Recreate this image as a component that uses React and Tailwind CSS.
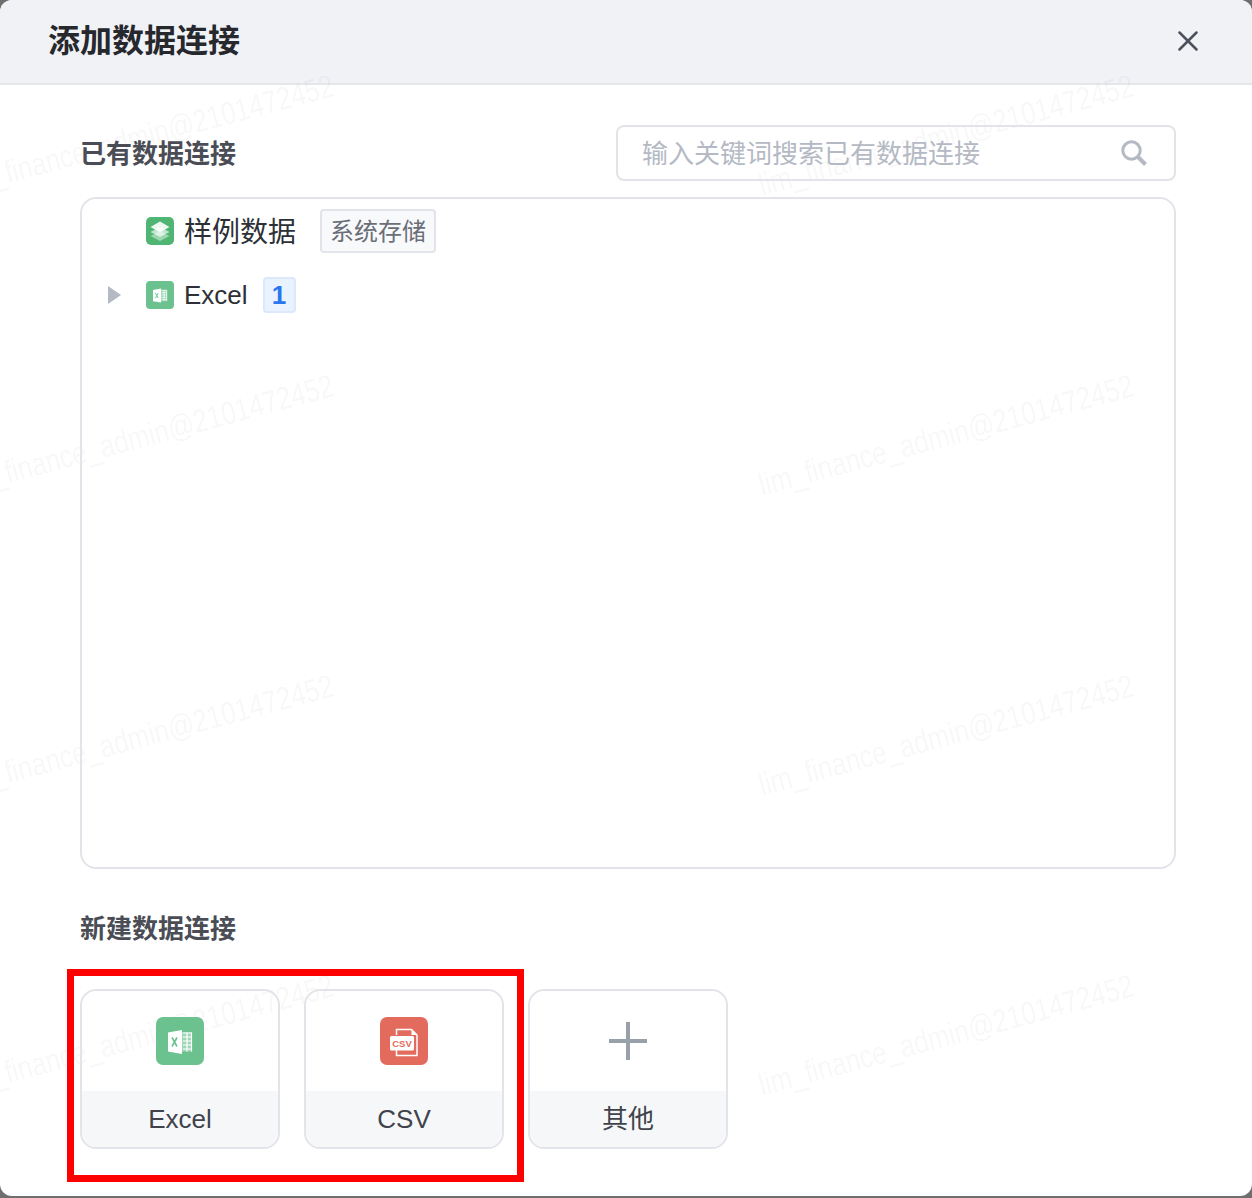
import React from 'react';
import { X } from 'lucide-react';

const cjk = '"Liberation Sans", "Noto Sans CJK SC", sans-serif';

const watermarks = [
  'left-[146px] top-[135px]',
  'left-[946px] top-[135px]',
  'left-[146px] top-[435px]',
  'left-[946px] top-[435px]',
  'left-[146px] top-[735px]',
  'left-[946px] top-[735px]',
  'left-[146px] top-[1035px]',
  'left-[946px] top-[1035px]'
];

const LayersIcon = () => (
  <svg viewBox="0 0 28 28" className="w-7 h-7 block">
    <rect width="28" height="28" rx="5" fill="#4fb573" />
    <path d="M14 14l-9.500 5 9.500 5 9.500-5z" fill="#fff" fillOpacity="0.45" />
    <path d="M14 10l-9.500 5 9.500 5 9.500-5z" fill="#fff" fillOpacity="0.65" />
    <path d="M14 4.500l-9.500 5.500 9.500 5.500 9.500-5.500z" fill="#fff" fillOpacity="0.9" />
  </svg>
);

const ExcelIcon = ({ className }) => (
  <svg viewBox="0 0 48 48" className={className}>
    <rect width="48" height="48" rx="7" fill="#6cc28f" />
    <path d="M26 13v24l-14-2.500V15.500z" fill="#fff" />
    <path d="M26 15h10v19.500H26z" fill="#fff" fillOpacity="0.35" />
    <path d="M27 16h8.500M27 20h8.500M27 24h8.500M27 28h8.500M27 32h8.500M31 15.500v19M35.500 15.500v19" stroke="#fff" strokeWidth="1.200" fill="none" />
    <path d="M16 20.500l5 9M21 20.500l-5 9" stroke="#6cc28f" strokeWidth="1.600" fill="none" />
  </svg>
);

const CsvIcon = ({ className }) => (
  <svg viewBox="0 0 48 48" className={className}>
    <rect width="48" height="48" rx="7" fill="#e36b5e" />
    <path d="M16.500 18v-5.500h15l5.500 5.500v20.500H16.500V33" stroke="#fff" strokeWidth="1.500" fill="none" />
    <path d="M31.500 12.500v5.500h5.500" fill="#fff" />
    <rect x="10" y="19" width="24" height="14.500" rx="1.500" fill="#fff" />
    <text x="22" y="29.500" textAnchor="middle" fontSize="9.500" fontWeight="700" fill="#e36b5e" fontFamily="Liberation Sans, sans-serif">CSV</text>
  </svg>
);

const SearchIcon = () => (
  <svg viewBox="0 0 26 26" className="w-[26px] h-[26px] block">
    <circle cx="10.500" cy="10.500" r="8.700" stroke="#b4b9c4" strokeWidth="3" fill="none" />
    <path d="M16.500 16.500L24.500 24.500" stroke="#b4b9c4" strokeWidth="4" fill="none" />
  </svg>
);

const PlusIcon = () => (
  <svg viewBox="0 0 38 38" className="w-[38px] h-[38px] block">
    <path d="M19 0v38M0 19h38" stroke="#98a0aa" strokeWidth="4" fill="none" />
  </svg>
);

const NewCard = ({ label, children }) => (
  <div className="w-[200px] h-[160px] border-2 border-[#e3e4ea] rounded-2xl overflow-hidden flex flex-col">
    <div className="h-[100px] flex items-center justify-center">{children}</div>
    <div className="flex-1 bg-[#f6f7f9] flex items-center justify-center text-[26px] text-[#40434b]">{label}</div>
  </div>
);

export default function App() {
  return (
    <div className="w-[1252px] h-[1198px] bg-[#6e6e6e] pb-[2px] overflow-hidden" style={{ fontFamily: cjk }}>
      <div className="relative w-full h-full bg-white rounded-[12px] overflow-hidden">
        <div className="h-[85px] bg-[#f0f2f6] border-b-2 border-[#e5e7eb] pl-12 pr-[47px] pb-[2px] flex items-center justify-between">
          <h1 className="text-[32px] font-semibold text-[#26282d]">添加数据连接</h1>
          <X className="w-[34px] h-[34px] text-[#4d515b]" strokeWidth={1.800} />
        </div>

        {watermarks.map((pos) => (
          <span
            key={pos}
            className={`absolute ${pos} -translate-x-1/2 -translate-y-1/2 -rotate-[15deg] scale-x-[0.81] text-[32px] leading-none whitespace-nowrap text-[#1f2a44]/[0.05]`}
          >
            lim_finance_admin@2101472452
          </span>
        ))}

        <div className="relative pl-20 pr-[76px] pt-10">
          <div className="flex items-center justify-between h-14">
            <h2 className="text-[26px] pt-[2px] font-semibold text-[#4a4d55]">已有数据连接</h2>
            <div className="w-[560px] h-14 border-2 border-[#e3e4ea] rounded-lg pl-[24px] pr-[27px] flex items-center justify-between text-[26px] text-[#b4b9c4]">
              <span className="pt-[2px]">输入关键词搜索已有数据连接</span>
              <SearchIcon />
            </div>
          </div>

          <div className="mt-4 h-[672px] border-2 border-[#e3e4ea] rounded-2xl pl-[26px] pt-[10px]">
            <div className="flex items-center h-11 pl-[38px]">
              <LayersIcon />
              <span className="ml-[10px] pt-[3px] text-[28px] text-[#2d3036]">样例数据</span>
              <span className="ml-6 w-[116px] h-11 border-2 border-[#e3e4ea] rounded bg-[#f8f9fb] flex items-center justify-center pt-[2px] text-2xl text-[#6a6e77]">系统存储</span>
            </div>
            <div className="flex items-center h-9 mt-[24px]">
              <span className="w-0 h-0 border-y-[9px] border-y-transparent border-l-[13px] border-l-[#b4b9c4]" />
              <span className="ml-[25px]"><ExcelIcon className="w-7 h-7 block" /></span>
              <span className="ml-[10px] text-[26px] text-[#2d3036]">Excel</span>
              <span className="ml-[15px] w-[33px] h-9 border-2 border-[#dbe9fb] rounded bg-[#e9f3ff] flex items-center justify-center text-[26px] font-bold text-[#2a76ef]">1</span>
            </div>
          </div>

          <h2 className="mt-[42px] text-[26px] leading-[36px] font-semibold text-[#4a4d55]">新建数据连接</h2>

          <div className="mt-[42px] flex gap-6">
            <NewCard label="Excel"><ExcelIcon className="w-12 h-12 block" /></NewCard>
            <NewCard label="CSV"><CsvIcon className="w-12 h-12 block" /></NewCard>
            <NewCard label="其他"><PlusIcon /></NewCard>
          </div>
        </div>

        <div className="absolute left-[67px] top-[969px] w-[457px] h-[213px] border-[7px] border-[#ff0000]" />
      </div>
    </div>
  );
}
